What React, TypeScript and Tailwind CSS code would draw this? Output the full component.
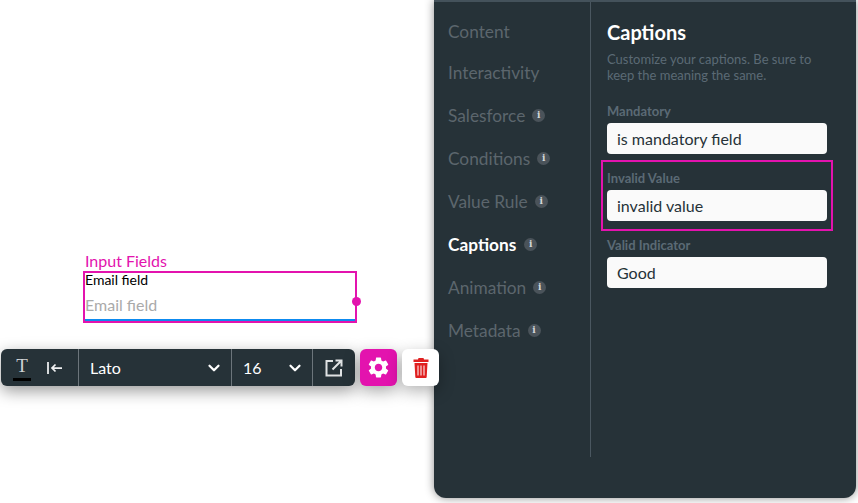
import { ChevronDown } from 'lucide-react';
import { MdSettings } from 'react-icons/md';

const navItems = [
  { label: 'Content', info: false, pad: 'h-[38px]' },
  { label: 'Interactivity', info: false, pad: 'h-[43px]' },
  { label: 'Salesforce', info: true, pad: 'h-[43px]' },
  { label: 'Conditions', info: true, pad: 'h-[43px]' },
  { label: 'Value Rule', info: true, pad: 'h-[43px]' },
  { label: 'Captions', info: true, active: true, pad: 'h-[43px]' },
  { label: 'Animation', info: true, pad: 'h-[43px]' },
  { label: 'Metadata', info: true, pad: 'h-[43px]' },
];

function InfoDot() {
  return (
    <span className="flex h-[13px] w-[13px] items-center justify-center rounded-full bg-[#4a535a] font-['DejaVu_Serif',serif] text-[9px] font-bold leading-none text-[#d5d8da]">
      i
    </span>
  );
}

function Field({ label, value }: { label: string; value: string }) {
  return (
    <div>
      <div className="mb-[3px] h-[18px] text-[13px] font-bold leading-[18px] text-[#5b6a75]">{label}</div>
      <div className="flex h-[31px] w-[220px] items-center rounded-[4px] bg-[#fafafa] pl-[10px] text-[16px] text-[#263238]">
        {value}
      </div>
    </div>
  );
}

export default function App() {
  return (
    <div className="relative h-[503px] w-[858px] overflow-hidden bg-white font-['Lato',sans-serif]">
      {/* Selected element on canvas */}
      <div className="absolute left-[85px] top-[251px] text-[16px] leading-[19px] text-[#e313ae]">Input Fields</div>
      <div className="absolute left-[83px] top-[271px] h-[52px] w-[274px] border-2 border-[#e313ae]">
        <div className="flex h-full flex-col border-b-2 border-[#0d8bf0]">
          <div className="h-[16px] text-[14px] leading-[13px] text-black">Email field</div>
          <div className="mt-[6px] text-[16px] leading-[19px] text-[#aaaaaa]">Email field</div>
        </div>
        <span className="absolute right-[-6px] top-[24px] h-[9px] w-[9px] rounded-full bg-[#e313ae]" />
      </div>

      {/* Toolbar */}
      <div className="absolute left-[1px] top-[349px] z-10 flex items-start gap-[5px]">
        <div className="flex h-[37px] w-[354px] items-center rounded-[6px] bg-[#263238] text-white shadow-[0_5px_16px_rgba(0,0,0,0.4)]">
          <div className="flex h-full w-[78px] items-center border-r border-[#6c757b]">
            <span className="relative ml-[12px] flex w-[18px] flex-col items-center font-['Liberation_Serif',serif] text-[19px] leading-[22px] text-[#cfd3d5]">
              T
              <span className="mt-[1px] h-[3px] w-[18px] bg-black" />
            </span>
            <svg width="16" height="12" viewBox="0 0 16 12" className="ml-[16px] text-[#f0f1f2]" fill="none" stroke="currentColor" strokeWidth="1.75">
              <path d="M1 0V12M15 6H5M8.500 2.500 5 6l3.500 3.500" />
            </svg>
          </div>
          <div className="flex h-full w-[153px] items-center justify-between border-r border-[#6c757b] pl-[11px] pr-[8px] text-[16px]">
            <span>Lato</span>
            <ChevronDown size={18} strokeWidth={3} />
          </div>
          <div className="flex h-full w-[81px] items-center justify-between border-r border-[#6c757b] pl-[11px] pr-[8px] text-[16px]">
            <span>16</span>
            <ChevronDown size={18} strokeWidth={3} />
          </div>
          <div className="flex flex-1 items-center justify-center">
            <svg width="18" height="18" viewBox="0 0 18 18" fill="none" stroke="#dfe2e3" strokeWidth="2">
              <path d="M8 2H1.500V16.500H16V10M7.500 10.500 16 2M10.500 1.500H16.500V7.500" />
            </svg>
          </div>
        </div>
        <div className="flex h-[37px] w-[37px] items-center justify-center rounded-[6px] bg-[#e313ae] text-white shadow-[0_5px_16px_rgba(0,0,0,0.35)]">
          <MdSettings size={25} />
        </div>
        <div className="flex h-[37px] w-[37px] items-center justify-center rounded-[6px] bg-white shadow-[0_5px_16px_rgba(0,0,0,0.3)]">
          <svg width="16" height="20" viewBox="0 0 16 20">
            <path fill="#e02020" d="M5.500 0h5l.5 1.500h4.500V4H.5V1.500H5zM1.500 5h13l-.8 14a1 1 0 0 1-1 1H3.300a1 1 0 0 1-1-1z" />
            <path stroke="#fff" strokeWidth="1" d="M5 7.500V17.500M8 7.500V17.500M11 7.500V17.500" />
          </svg>
        </div>
      </div>

      {/* Settings panel */}
      <div className="absolute left-[434px] top-0 h-[498px] w-[422px] rounded-b-[12px] border-t-2 border-[#44525b] bg-[#263238] shadow-[0_0_10px_rgba(0,0,0,0.45)]">
        <div className="flex h-[455px]">
          <div className="w-[157px] shrink-0 border-r border-[#4a5760] pl-[14px] pt-[11px]">
            {navItems.map(item => (
              <div key={item.label} className={`flex items-center ${item.active ? 'gap-[8px]' : 'gap-[7px]'} ${item.pad}`}>
                <span className={item.active ? 'text-[17.300px] font-bold text-white' : 'text-[17.300px] text-[#5c666d]'}>{item.label}</span>
                {item.info && <InfoDot />}
              </div>
            ))}
          </div>
          <div className="flex-1 pl-[16px] pt-[17px]">
            <h2 className="text-[20px] font-bold leading-[26px] text-white">Captions</h2>
            <p className="mt-[6px] w-[210px] text-[13px] leading-[16px] text-[#5b6a75]">
              Customize your captions. Be sure to keep the meaning the same.
            </p>
            <div className="mt-[19px]">
              <Field label="Mandatory" value="is mandatory field" />
            </div>
            <div className="mt-[6px] ml-[-6px] h-[71px] w-[232px] border-2 border-[#e313ae] pl-[4px] pt-[7px]">
              <Field label="Invalid Value" value="invalid value" />
            </div>
            <div className="mt-[5px]">
              <Field label="Valid Indicator" value="Good" />
            </div>
          </div>
        </div>
      </div>
    </div>
  );
}
